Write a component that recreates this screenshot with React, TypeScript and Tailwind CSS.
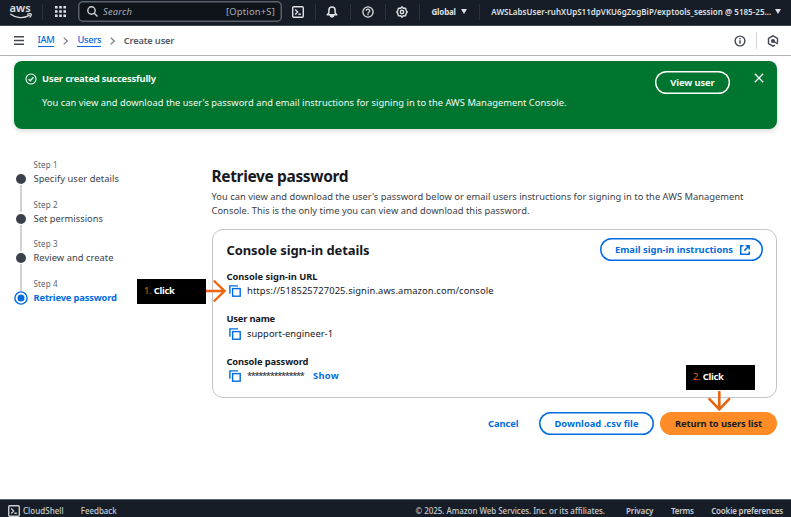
import type { ReactNode } from "react";

function ShellIcon({ className }: { className: string }) {
  return (
    <svg viewBox="0 0 12 12" className={className} fill="none" stroke="currentColor" strokeWidth="1.4">
      <rect x="0.7" y="0.7" width="10.6" height="10.6" rx="1.2" />
      <path d="M3.2 3.6 5.6 6 3.2 8.4M6.4 8.3h2.4" />
    </svg>
  );
}

function CopyIcon() {
  return (
    <svg viewBox="0 0 12 12" className="size-3 shrink-0" fill="none" stroke="#006ce0" strokeWidth="1.4">
      <rect x="3.6" y="3.6" width="7.6" height="7.6" />
      <path d="M0.9 8.8V0.9H9" />
    </svg>
  );
}

function NavDivider() {
  return <span className="h-4 w-px shrink-0 bg-[#2b323b]" />;
}

function Caret() {
  return (
    <svg viewBox="0 0 6 5" className="h-[5px] w-1.5 shrink-0" fill="currentColor">
      <path d="M0 0h6L3 5z" />
    </svg>
  );
}

function TopNav() {
  return (
    <header className="flex h-[26px] shrink-0 items-center border-b border-[#414750] bg-[#161d26] pb-[2px] text-[#dfe1e4]">
      <div className="ml-[9.5px] flex w-[32.5px] flex-col items-start">
        <span className="-mt-[3px] text-[11px] leading-[11px] font-semibold tracking-[0.1px]">aws</span>
        <svg viewBox="0 0 22 6" className="h-1.5 w-[22px]" fill="none" stroke="currentColor" strokeWidth="1.3" strokeLinecap="round">
          <path d="M0.8 1.2C6 5.4 14 5.6 19.2 2.4M17.6 1.1c1.8-.5 3.3-.4 3.5 0s0 1.9-1.1 3" />
        </svg>
      </div>
      <NavDivider />
      <svg viewBox="0 0 11 11" className="ml-[12px] size-[11px] shrink-0" fill="currentColor">
        <path d="M0 0h2.6v2.6H0zM4.2 0h2.6v2.6H4.2zM8.4 0H11v2.6H8.4zM0 4.2h2.6v2.6H0zM4.2 4.2h2.6v2.6H4.2zM8.4 4.2H11v2.6H8.4zM0 8.4h2.6V11H0zM4.2 8.4h2.6V11H4.2zM8.4 8.4H11V11H8.4z" />
      </svg>
      <div className="ml-3 flex h-[21px] w-[204px] shrink-0 items-center rounded-[5px] bg-[#0f141a] pr-[7px] pl-[9px] text-[9.33px] text-[#a9aeb5] shadow-[inset_0_0_0_1.5px_#5a616b]">
        <svg viewBox="0 0 11 11" className="size-[11px]" fill="none" stroke="#d0d3d8" strokeWidth="1.4">
          <circle cx="4.5" cy="4.5" r="3.7" />
          <path d="m7.2 7.2 3.3 3.3" />
        </svg>
        <span className="ml-[5px] italic tracking-[0.23px]">Search</span>
        <span className="ml-auto tracking-[0.23px]">[Option+S]</span>
      </div>
      <ShellIcon className="ml-[10px] size-3 shrink-0" />
      <span className="w-[11px]" />
      <NavDivider />
      <svg viewBox="0 0 12 12" className="ml-[10px] size-3 shrink-0" fill="none" stroke="currentColor" strokeWidth="1.5">
        <path d="M1.2 8.8h9.6L9.1 6.9V4.2a3.1 3.1 0 0 0-6.2 0v2.7z" strokeLinejoin="round" />
        <path d="M4.3 9.3a1.7 1.7 0 0 0 3.4 0z" fill="currentColor" />
      </svg>
      <span className="w-3" />
      <NavDivider />
      <svg viewBox="0 0 12 12" className="ml-[11px] size-3 shrink-0" fill="none" stroke="currentColor" strokeWidth="1.3">
        <circle cx="6" cy="6" r="5.1" />
        <path d="M4.3 4.9a1.7 1.7 0 1 1 2.5 1.4c-.6.3-.8.5-.8 1.1M6 8.1v1.2" />
      </svg>
      <span className="w-[11px]" />
      <NavDivider />
      <svg viewBox="0 0 12 12" className="ml-[10px] size-3 shrink-0" fill="none" stroke="currentColor" strokeWidth="1.4">
        <path d="m6 .8 1.3 1.4 2.2-.1.6 2.2L11.2 6l-1.1 1.7-.6 2.2-2.2-.1L6 11.2 4.7 9.8l-2.2.1-.6-2.2L.8 6l1.1-1.7.6-2.2 2.2.1z" strokeLinejoin="round" />
        <circle cx="6" cy="6" r="1.7" />
      </svg>
      <span className="w-[11px]" />
      <NavDivider />
      <span className="ml-[11.5px] text-[8px] font-bold tracking-[-0.18px]">Global</span>
      <span className="w-[5px]" />
      <Caret />
      <span className="w-3" />
      <NavDivider />
      <span className="ml-[11.5px] text-[8px] font-semibold whitespace-nowrap tracking-[0.02px]">
        AWSLabsUser-ruhXUpS11dpVKU6gZogBiP/exptools_session @ 5185-25...
      </span>
      <span className="w-1" />
      <Caret />
    </header>
  );
}

function Chevron() {
  return (
    <svg viewBox="0 0 5 8" className="h-2 w-[5px]" fill="none" stroke="#7d838c" strokeWidth="1.3">
      <path d="M.7.6 4.2 4 .7 7.4" />
    </svg>
  );
}

function Breadcrumbs() {
  return (
    <div className="flex h-[30px] shrink-0 items-center border-b border-[#b4b4bb] pl-3.5 text-[9.33px] text-[#424650]">
      <svg viewBox="0 0 10 9" className="h-[9px] w-2.5" stroke="#424650" strokeWidth="1.4">
        <path d="M0 .7h10M0 4.5h10M0 8.3h10" />
      </svg>
      <a className="ml-[13.5px] border-b border-[#006ce0] leading-[12px] font-medium tracking-[-0.34px] text-[#006ce0]">IAM</a>
      <span className="w-[9px]" />
      <Chevron />
      <a className="ml-[9px] border-b border-[#006ce0] leading-[12px] font-medium tracking-[-0.3px] text-[#006ce0]">Users</a>
      <span className="w-[9px]" />
      <Chevron />
      <span className="ml-[8.5px] font-semibold tracking-[-0.18px] text-[#555a64]">Create user</span>
      <svg viewBox="0 0 12 12" className="ml-auto size-3" fill="none" stroke="#424650" strokeWidth="1.4">
        <circle cx="6" cy="6" r="4.9" />
        <path d="M6 5.2v3.6M6 3.1v1.2" />
      </svg>
      <span className="mr-[10px] ml-[10px] h-[17px] w-px bg-[#d5d7db]" />
      <svg viewBox="0 0 12 12" className="mr-[12.5px] size-3" fill="none" stroke="#424650" strokeWidth="1.4">
        <path d="M8 10.1 6 11.2 1.5 8.6V3.4L6 .8l4.5 2.6v4.4" />
        <circle cx="6" cy="6" r="1.3" fill="#424650" />
        <path d="m6 6 4.8 2.8" />
      </svg>
    </div>
  );
}

function SuccessBanner() {
  return (
    <div className="mx-3.5 mt-[5px] flex h-[68px] shrink-0 items-start rounded-lg bg-[#00752f] text-[9.33px] text-[#f4fbf6] shadow-[0_2px_5px_rgba(0,0,0,0.15)]">
      <svg viewBox="0 0 12 12" className="mt-[11.5px] ml-[10.5px] size-3 shrink-0" fill="none" stroke="currentColor" strokeWidth="1.1">
        <circle cx="6" cy="6" r="5" />
        <path d="m3.6 6.1 1.7 1.7 3.1-3.5" strokeWidth="1.3" />
      </svg>
      <div className="mt-[11px] ml-[5.5px] flex flex-col gap-[10px] leading-[14px]">
        <p className="font-bold tracking-[-0.152px]">User created successfully</p>
        <p className="whitespace-nowrap tracking-[0.018px]">
          You can view and download the user's password and email instructions for signing in to the AWS Management Console.
        </p>
      </div>
      <button className="mt-[10px] ml-auto h-[23px] w-[75px] rounded-full text-center leading-[23px] font-bold tracking-[-0.08px] shadow-[inset_0_0_0_1.4px_white]">
        View user
      </button>
      <svg viewBox="0 0 10 10" className="mt-[12px] mr-[13px] ml-[24px] size-2.5 shrink-0" stroke="currentColor" strokeWidth="1.3">
        <path d="m.8.8 8.4 8.4M9.200.8.8 9.2" />
      </svg>
    </div>
  );
}

function Step({ label, active, last, children }: { label: string; active?: boolean; last?: boolean; children: ReactNode }) {
  return (
    <li className="flex h-[39.7px]">
      <div className="flex w-3.5 shrink-0 flex-col items-center pt-[14px]">
        <span className="flex size-3.5 shrink-0 items-center justify-center">
          {active ? (
            <svg viewBox="0 0 14 14" className="size-3.5">
              <circle cx="7" cy="7" r="6.1" fill="white" stroke="#006ce0" strokeWidth="1.4" />
              <circle cx="7" cy="7" r="3.5" fill="#006ce0" />
            </svg>
          ) : (
            <span className="size-2.5 rounded-full bg-[#3b414b]" />
          )}
        </span>
        {!last && <span className="-mt-px -mb-[14px] w-[2px] flex-1 bg-[#d0d2d8]" />}
      </div>
      <div className="ml-[5.5px] whitespace-nowrap">
        <p className="text-[8px] leading-[14px] tracking-[0.12px] text-[#5c626c]">{label}</p>
        {children}
      </div>
    </li>
  );
}

function Stepper() {
  return (
    <ol className="w-[197.5px] shrink-0 text-[9.33px] leading-[14.4px] text-[#3a3e48]">
      <Step label="Step 1"><p className="tracking-[0.076px]">Specify user details</p></Step>
      <Step label="Step 2"><p className="tracking-[0.009px]">Set permissions</p></Step>
      <Step label="Step 3"><p className="tracking-[0.045px]">Review and create</p></Step>
      <Step label="Step 4" active last><p className="font-bold tracking-[-0.153px] text-[#006ce0]">Retrieve password</p></Step>
    </ol>
  );
}

function Field({ label, children }: { label: ReactNode; children: ReactNode }) {
  return (
    <div className="h-[42.5px]">
      {label}
      <div className="flex h-[14.6px] items-center pl-[2.5px]">
        <CopyIcon />
        {children}
      </div>
    </div>
  );
}

function SignInCard() {
  return (
    <section className="mt-[11px] h-[169px] rounded-[11px] border border-[#c3c5ca] pr-[13.5px] pl-[14px] text-[9.33px] leading-[14px] text-[#16191f]">
      <div className="mt-2 flex h-[24px] items-center justify-between">
        <h2 className="text-[13px] font-bold tracking-[-0.1px]">Console sign-in details</h2>
        <button className="flex h-[23px] w-[163px] items-center rounded-full pl-[15.5px] leading-none font-bold tracking-[0.014px] text-[#006ce0] shadow-[inset_0_0_0_1.5px_#006ce0]">
          <span>Email sign-in instructions</span>
          <svg viewBox="0 0 10 10" className="ml-[6.5px] size-2.5" fill="none" stroke="currentColor" strokeWidth="1.5">
            <path d="M3.4.8H.8v8.4h8.4V6.6M5.6.8h3.6v3.6M9 1 4.4 5.6" />
          </svg>
        </button>
      </div>
      <div className="mt-[8.4px]">
        <Field label={<p className="font-bold tracking-[-0.014px]">Console sign-in URL</p>}>
          <span className="ml-[6px] tracking-[0.118px]">https://518525727025.signin.aws.amazon.com/console</span>
        </Field>
        <Field label={<p className="font-bold tracking-[-0.2px]">User name</p>}>
          <span className="ml-[6px] tracking-[0.045px]">support-engineer-1</span>
        </Field>
        <Field label={<p className="font-bold tracking-[-0.115px]">Console password</p>}>
          <span className="ml-[6px] w-[66px] tracking-[-1.365px]">***************</span>
          <a className="font-bold tracking-[0.3px] text-[#006ce0]">Show</a>
        </Field>
      </div>
    </section>
  );
}

function Actions() {
  return (
    <div className="mt-[14px] flex h-[23px] items-center justify-end text-[9.33px] leading-[23px] font-bold">
      <a className="mr-[20.5px] tracking-[-0.063px] text-[#006ce0]">Cancel</a>
      <button className="mr-[6px] h-[23px] w-[115px] rounded-full tracking-[0.02px] text-[#006ce0] shadow-[inset_0_0_0_1.5px_#006ce0]">
        Download .csv file
      </button>
      <button className="h-[23px] w-[117px] rounded-full bg-[#ff8c26] tracking-[-0.087px] text-[#16191f]">
        Return to users list
      </button>
    </div>
  );
}

function Footer() {
  return (
    <footer className="flex h-[18px] shrink-0 items-start overflow-hidden border-t border-[#5c626b] bg-[#161d26] pt-[5px] pr-2 pl-2 text-[8px] leading-3 font-medium whitespace-nowrap text-[#c9ccd1]">
      <ShellIcon className="size-3 shrink-0" />
      <span className="ml-[3px] tracking-[0.03px]">CloudShell</span>
      <span className="ml-[17px] tracking-[-0.05px]">Feedback</span>
      <span className="ml-auto tracking-[-0.04px]">© 2025. Amazon Web Services. Inc. or its affiliates.</span>
      <span className="ml-[21px] font-semibold tracking-[-0.104px]">Privacy</span>
      <span className="ml-[17.5px] font-semibold tracking-[-0.195px]">Terms</span>
      <span className="ml-[17.5px] font-semibold tracking-[-0.182px]">Cookie preferences</span>
    </footer>
  );
}

function Callout({ number, className }: { number: string; className: string }) {
  return (
    <div className={`absolute flex h-[25px] w-[69px] items-center bg-black pb-px pl-[7px] text-[9.33px] leading-none text-white ${className}`}>
      <span className="mr-[2px] text-[#f0620d]">{number}</span>
      <span className="font-bold tracking-[-0.28px]">Click</span>
    </div>
  );
}

export default function App() {
  return (
    <div className="relative flex h-[517px] w-[791px] flex-col overflow-hidden bg-white font-['Noto_Sans',sans-serif]">
      <TopNav />
      <Breadcrumbs />
      <SuccessBanner />
      <main className="flex flex-1 pt-[29px] pr-3.5 pl-3.5">
        <Stepper />
        <div className="min-w-0 flex-1 pt-[8px]">
          <h1 className="text-[15.5px] leading-[21px] font-bold tracking-[-0.36px] text-[#16191f]">Retrieve password</h1>
          <p className="mt-[2.5px] text-[9.33px] leading-[14px] whitespace-nowrap text-[#3a3e48]">
            <span className="block tracking-[0.016px]">
              You can view and download the user's password below or email users instructions for signing in to the AWS Management
            </span>
            <span className="block tracking-[0.027px]">Console. This is the only time you can view and download this password.</span>
          </p>
          <SignInCard />
          <Actions />
        </div>
      </main>
      <Footer />
      <Callout number="1." className="top-[279px] left-[137px]" />
      <svg viewBox="0 0 20 24" className="absolute top-[279px] left-[206px] h-6 w-5" fill="none" stroke="#f0620d" strokeWidth="2.3" strokeLinecap="round">
        <path d="M0 12h18M8.5 2.2 18.5 12 8.5 21.8" />
      </svg>
      <Callout number="2." className="top-[364.5px] left-[686px]" />
      <svg viewBox="0 0 24 20" className="absolute top-[391px] left-[707px] h-5 w-6" fill="none" stroke="#e8630f" strokeWidth="2.6" strokeLinecap="round">
        <path d="M12.3 1v17M2.5 8.2l9.800 10.2 9.800-10.2" />
      </svg>
    </div>
  );
}
